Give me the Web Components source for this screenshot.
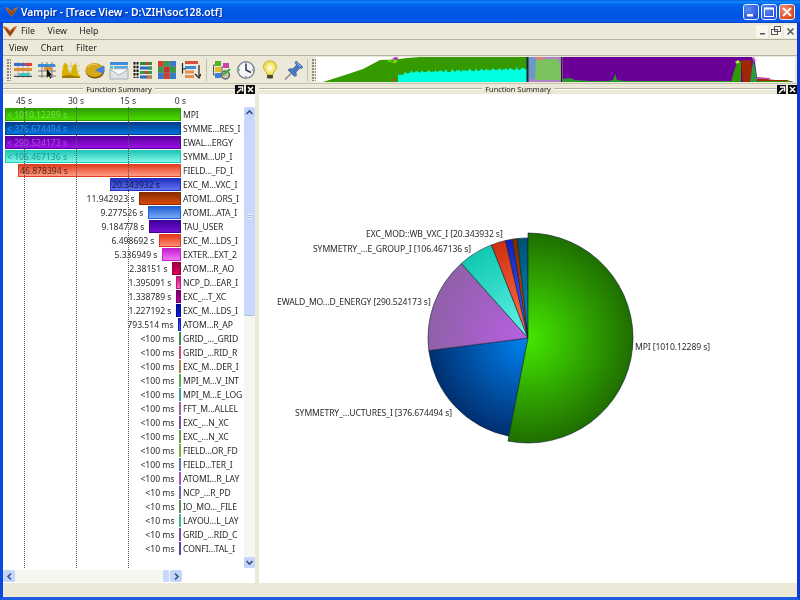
<!DOCTYPE html>
<html><head><meta charset="utf-8"><title>Vampir</title>
<style>html,body{margin:0;padding:0;background:#ece9d8;overflow:hidden}</style></head>
<body><vampir-app></vampir-app>
<script>
const FONT='"Noto Sans","Open Sans",sans-serif';
const LOGO=`<svg viewBox="0 0 16 14" width="100%" height="100%"><path d="M0 1C3 1 6 3 7.500 6L8 3.500 8.500 6C10 3 13 1 16 1 14 5 11 9 8 13 5 9 2 5 0 1Z" fill="#c8641e"/><path d="M3 3.500C5 4.500 7 6.500 8 9 9 6.500 11 4.500 13 3.500 11.500 6.500 9.500 9 8 11.500 6.500 9 4.500 6.500 3 3.500Z" fill="#6e3a18"/></svg>`;
class Base extends HTMLElement{
  render(html){ (this.shadowRoot||this.attachShadow({mode:'open'})).innerHTML=html; }
}
class TitleBar extends Base{connectedCallback(){this.render(`<style>
:host{display:flex;align-items:center;height:23px;flex:none;padding:0 5px 0 5px;box-sizing:border-box;
background:linear-gradient(#0a5fe0 0,#0f8aff 2px,#0068ee 4px,#0058e6 10px,#0054e3 17px,#0a5cf0 21px,#0040c0 23px);color:#fff;font:600 10.300px ${FONT};text-shadow:1px 1px 0 #0a2f9a}
.logo{width:13px;height:12px;margin-right:3px}.t{flex:1;white-space:nowrap}
.b{width:16px;height:16px;margin-left:2px;border:1px solid #e8eefc;border-radius:3px;box-sizing:border-box;display:flex;align-items:center;justify-content:center;background:radial-gradient(circle at 30% 30%,#5f8ef0,#2450d8 80%)}
.b.x{background:radial-gradient(circle at 30% 30%,#f09070,#d8401c 80%)} svg{display:block}
</style><span class="logo">${LOGO}</span><span class="t">Vampir - [Trace View - D:\\ZIH\\soc128.otf]</span>
<span class="b"><svg width="12" height="12"><rect x="2" y="8" width="6" height="2.500" fill="#fff"/></svg></span>
<span class="b"><svg width="12" height="12"><rect x="1.500" y="2.500" width="9" height="8" fill="none" stroke="#fff" stroke-width="1"/><rect x="1" y="1.500" width="10" height="2" fill="#fff"/></svg></span>
<span class="b x"><svg width="12" height="12"><path d="M2 2L10 10M10 2L2 10" stroke="#fff" stroke-width="1.800"/></svg></span>`)}}
class MenuBar extends Base{connectedCallback(){const items=(this.getAttribute('items')||'').split(',');const main=this.hasAttribute('main');
this.render(`<style>
:host{display:flex;align-items:center;flex:none;box-sizing:border-box;height:${main?17:16}px;border-bottom:1px solid #b4b1a2;font:8.800px ${FONT};color:#222;background:#ece9d8;padding-left:${main?0:6}px}
.logo{width:14px;height:13px;margin-right:4px}span.i{margin-right:12.500px}
.sp{flex:1}.m{width:12px;height:13px;margin-left:2px;background:#f6f5ee;display:flex;align-items:center;justify-content:center}
</style>${main?`<span class="logo">${LOGO}</span>`:''}${items.map(i=>`<span class="i">${i}</span>`).join('')}<span class="sp"></span>
${main?`<span class="m"><svg width="9" height="9"><rect x="2" y="6" width="5" height="1.500" fill="#555"/></svg></span>
<span class="m"><svg width="10" height="10"><rect x=".5" y="3.500" width="6" height="5" fill="none" stroke="#555"/><rect x="3.500" y=".5" width="6" height="5" fill="none" stroke="#555"/></svg></span>
<span class="m" style="margin-right:1px"><svg width="9" height="9"><path d="M1.500 1.500L7.500 7.500M7.500 1.500L1.500 7.500" stroke="#555" stroke-width="1.500"/></svg></span>`:''}`)}}
const ICONS=[
`<path d="M1 5H19M1 10H19M1 15H19M5 2V18M10 2V18M15 2V18" stroke="#8b8878" stroke-width=".6"/><rect x="1" y="3" width="12" height="3" fill="#3c6cc4"/><rect x="12" y="3" width="7" height="3" fill="#d84040"/><rect x="1" y="8" width="18" height="3" fill="#e0903c"/><rect x="6" y="13" width="11" height="3" fill="#40c8c0"/><rect x="1" y="16" width="18" height="1" fill="#445"/>`,
`<path d="M1 6H19M1 11H19M1 16H19M5 2V18M10 2V18M15 2V18" stroke="#55524a" stroke-width=".7"/><rect x="1" y="4" width="17" height="3" fill="#3c8cd8"/><rect x="7" y="7" width="8" height="3" fill="#e09030"/><path d="M10 9L15 15 13 15.500 14.500 18 13 18.500 12 16 10 17Z" fill="#111"/>`,
`<rect x="1" y="2" width="18" height="16" fill="#eee8c8"/><path d="M1 6H19M1 11H19M5 2V18M10 2V18M15 2V18" stroke="#aaa" stroke-width=".5"/><path d="M1 18V12L3 3 6 4 8 12 10 13 12 5 15 4 17 14 19 16V18Z" fill="#d8b000"/><path d="M1 18V16L8 15 19 17V18Z" fill="#a07800"/>`,
`<ellipse cx="10" cy="11" rx="9.500" ry="7.500" fill="#7a5c00"/><ellipse cx="9.500" cy="10" rx="9" ry="7" fill="#d4a818"/><path d="M10 10L19 5.500C20 8 20 11 18 14Z" fill="#4a7fd8"/><path d="M3 7C6 4 9 4 12 5" stroke="#f0d870" fill="none"/>`,
`<rect x="1" y="2" width="18" height="3" fill="#3c8cd8"/><rect x="5" y="6" width="14" height="2.500" fill="#58a8e8"/><rect x="1" y="6" width="3" height="2.500" fill="#40c8c0"/><rect x="1" y="9" width="18" height="10" fill="#dfe3e6" stroke="#8a97a0" stroke-width=".7"/><path d="M1 9.500L10 15 19 9.500" fill="#fafafa" stroke="#8a97a0" stroke-width=".7"/>`,
`<path d="M1.500 2V18M4.500 2V18" stroke="#111" stroke-width="2" stroke-dasharray="2.500 1.200"/><g><rect x="7" y="2" width="12" height="3" fill="#2f8a3c"/><rect x="7" y="6.500" width="12" height="3" fill="#2a6cc4"/><rect x="7" y="11" width="12" height="3" fill="#3a9a40"/><rect x="7" y="15.500" width="12" height="3" fill="#2a6cc4"/><rect x="13" y="2" width="3" height="3" fill="#c84040"/><rect x="15" y="6.500" width="4" height="3" fill="#3a9a40"/><rect x="12" y="11" width="3" height="3" fill="#c84040"/><rect x="14" y="15.500" width="5" height="3" fill="#d08030"/></g>`,
`<rect x="1" y="1" width="18" height="18" fill="#888"/><g><rect x="1" y="1" width="5.500" height="5.500" fill="#d04030"/><rect x="7" y="1" width="5.500" height="5.500" fill="#3a9a40"/><rect x="13" y="1" width="6" height="5.500" fill="#3a78c8"/><rect x="1" y="7" width="5.500" height="5.500" fill="#3a9a40"/><rect x="7" y="7" width="5.500" height="5.500" fill="#c83030"/><rect x="13" y="7" width="6" height="5.500" fill="#3a9a40"/><rect x="1" y="13" width="5.500" height="6" fill="#3a78c8"/><rect x="7" y="13" width="5.500" height="6" fill="#d04030"/><rect x="13" y="13" width="6" height="6" fill="#3a78c8"/></g>`,
`<rect x="4" y="1" width="13" height="3" fill="#d85040"/><rect x="4" y="6" width="11" height="3" fill="#3c8cd8"/><rect x="4" y="10.500" width="9" height="3" fill="#e09050"/><rect x="4" y="15" width="9" height="3" fill="#e09050"/><path d="M1.500 3V13.500M1.500 9H5M18 5V16M14 14L18 18 20 14" stroke="#222" stroke-width="1.200" fill="none"/>`,
`<path d="M4 5H1.500V15H4M10 6V13" stroke="#556" fill="none"/><rect x="3" y="1" width="6" height="5" fill="#58b030"/><rect x="3" y="7" width="6" height="5" fill="#e0c020"/><rect x="3" y="13" width="6" height="5" fill="#4080d8"/><rect x="11" y="3" width="6" height="5" fill="#d040a0"/><circle cx="13.500" cy="15" r="4" fill="#c8c4b0" stroke="#666" stroke-width="1.500"/><path d="M11 15L18 9" stroke="#30b030" stroke-width="2"/>`,
`<circle cx="10" cy="10" r="9" fill="#7f8a96"/><circle cx="10" cy="10" r="7.500" fill="#f4f6f8"/><path d="M10 4V10L15 12.500" stroke="#334" stroke-width="1.500" fill="none"/><path d="M10 2.800V4M10 16V17.200M2.800 10H4M16 10H17.200" stroke="#556"/>`,
`<defs><radialGradient id="bulb"><stop offset="0" stop-color="#fffff0"/><stop offset="1" stop-color="#f0d830"/></radialGradient></defs><path d="M10 1C5.500 1 3.500 4 3.500 7C3.500 10.500 7 11.500 7 15H13C13 11.500 16.500 10.500 16.500 7C16.500 4 14.500 1 10 1Z" fill="url(#bulb)" stroke="#b8a020" stroke-width=".7"/><rect x="7" y="15" width="6" height="3.500" rx="1" fill="#444"/>`,
`<path d="M12 1L19 7 17.500 8.500 16 8 12 12 12.500 15.500 10.500 16.500 4 10 6 8.500 8.500 9 12.500 5 11 3Z" fill="#4a78c0" stroke="#2a4a88" stroke-width=".5"/><path d="M12.500 3L17 7" stroke="#a0c0f0"/><path d="M7 13.500L1 19.500" stroke="#8a8a8a" stroke-width="1.500"/>`];
class ToolBar extends Base{connectedCallback(){
 const ic=i=>`<span class="ic"><svg viewBox="0 0 20 20" width="20" height="20">${ICONS[i]}</svg></span>`;
 let cy=[];for(let x=398;x<=527;x+=1.5){const base=x<410?78-(x-398)*.3:74.500-(x-410)*.03;cy.push(x+','+(base-2.500*Math.abs(Math.sin(x*1.7)+Math.sin(x*.63))*.7).toFixed(1))}
 this.render(`<style>
:host{display:flex;align-items:center;flex:none;height:28px;box-sizing:border-box;background:#ece9d8;border-bottom:1px solid #c5c2b2;padding:1px 2px 1px 4px}
.grip{width:4px;height:22px;flex:none;background:radial-gradient(circle at 1px 1px,#8a8a80 .8px,transparent 1px) 0 0/3px 3px}
.ic{width:24px;height:22px;flex:none;display:flex;align-items:center;justify-content:center}
.sep{width:1px;height:22px;background:#c2bfae;margin:0 3px;flex:none}
.ov{flex:none;display:block}
</style><span class="grip"></span>${[0,1,2,3,4,5,6,7].map(ic).join('')}<span class="sep"></span>${[8,9,10,11].map(ic).join('')}
<span class="sep" style="margin:0 4px 0 1px"></span><span class="grip"></span>
<svg class="ov" width="479" height="25" viewBox="316 58 479 25">
<rect x="316" y="58" width="479" height="25" fill="#fff"/>
<path d="M323 83L345 76 363 70 380 61 395 60.500 407 59 420 58H527V83Z" fill="#349a00"/>
<path d="M387 62l3-1.500 2 3 3-3 3 1-3 3z" fill="#7ae000"/><path d="M392 60l3-2 4 1-3 2z" fill="#c020c0"/>
<path d="M398 83L${cy.join(' ')} 527 83Z" fill="#00ffe0"/>
<rect x="392" y="80" width="3" height="2" fill="#c04030"/>
<rect x="527" y="58" width="35" height="25" fill="#b080c8"/>
<path d="M529 58h9l2 22h-11z" fill="#6c98c8"/><path d="M536 60h22l2 6 1 15h-26z" fill="#7cc25e"/><path d="M535 58h8v3h-6z" fill="#e08080"/>
<rect x="526.500" y="58" width="2" height="25" fill="#123"/><rect x="561" y="58" width="1.500" height="25" fill="#222"/>
<path d="M562.500 58H752L755 63 757 78 770 81 790 82 794 83H562.500Z" fill="#6a0098"/>
<path d="M562.500 83V80L570 79 575 81 590 82 608 82 613 81 615 75 617 81 625 82 730 82 732 83Z" fill="#2a9a2a"/>
<path d="M731 83L734 72 737 64 741 62 741 83Z" fill="#2e9a00"/><path d="M741 61.500L751 61 752 70 750 83H743L742 72Z" fill="#a02800"/><path d="M750 83L752 70 753 61 755 68 757 80 760 83Z" fill="#2a9a40"/>
<path d="M735 63l3-2 2 2-3 2z" fill="#b0e840"/><path d="M752 59l2-1 2 4-2 1z" fill="#c060c0"/>
<path d="M757 79L775 81 787 81 792 83H757Z" fill="#a02800"/><path d="M757 78L770 79 770 80 757 80Z" fill="#c050c0"/>
<path d="M758 82L790 82 792 83H758Z" fill="#2e9a00"/>
</svg>`)}}
class FnPanel extends Base{connectedCallback(){this.render(`<style>
:host{display:flex;flex-direction:column;min-width:0;font:8.600px ${FONT};color:#222}
.h{height:10px;flex:none;display:flex;align-items:center;background:#ece9d8}
.l{flex:1;height:0;border-top:1px solid #b4b1a2;border-bottom:1px solid #fff}
.t{padding:0 3px;white-space:nowrap;font-size:7.400px;line-height:10px}
.tl{width:20px;display:flex;justify-content:flex-end;gap:2px;flex:none}
.k{width:9px;height:9px;background:#0a0a0a;display:block}
.b{flex:1;background:#fff;min-height:0;display:flex;flex-direction:column;overflow:hidden}
</style><div class="h"><span class="l"></span><span class="t">${this.getAttribute('label')}</span><span class="l"></span>
<span class="tl"><svg class="k" viewBox="0 0 9 9"><path d="M2 8L6 4M3 2H7.500V6.500" stroke="#fff" stroke-width="1.600" fill="none"/></svg><svg class="k" viewBox="0 0 9 9"><path d="M2 2L7 7M7 2L2 7" stroke="#fff" stroke-width="1.500"/></svg></span></div>
<div class="b"><slot></slot></div>`)}}
class TimeAxis extends Base{connectedCallback(){this.render(`<style>
:host{display:flex;flex:none;height:13px;gap:20px;padding-left:5px;font:8.600px ${FONT};color:#333;background:#fff}
span{width:32px;text-align:center;line-height:14px}span:last-child{width:33px}
</style><span>45 s</span><span>30 s</span><span>15 s</span><span>0 s</span>`)}}
class FnRow extends Base{connectedCallback(){
 const w=+this.getAttribute('w'),c=this.getAttribute('c'),d=this.getAttribute('d')||c,tc=this.getAttribute('tc'),v=this.getAttribute('v'),inside=tc!==null;
 this.render(`<style>
:host{display:flex;height:14px;box-sizing:border-box;padding-top:1px;font:8.600px/14px ${FONT};color:#2a2a2a;white-space:nowrap}
.a{width:178px;flex:none;display:flex;justify-content:flex-end;align-items:flex-start}
.bar{width:${w}px;height:13px;flex:none;box-sizing:border-box;border:1px solid ${c};background:linear-gradient(${c},${d});overflow:hidden}
.bar span{color:${tc||'#222'};padding-left:1px;line-height:12px;display:block}
.v{padding-right:4.500px}.n{padding-left:2px;color:#2a2a2a;letter-spacing:-.08px}
</style><div class="a">${inside?'':`<span class="v"><slot></slot></span>`}<div class="bar">${inside?`<span>${v}</span>`:''}</div></div><span class="n">${this.getAttribute('n')}</span>`)}}
class VScroll extends Base{connectedCallback(){this.render(`<style>
:host{display:flex;flex-direction:column;width:11px;flex:none;background:#f6f6f0;position:relative}
.a{height:11px;background:#c4d4fa;border-radius:2px;display:flex;align-items:center;justify-content:center;flex:none}
.th{height:198px;background:#c8d8fc;border-radius:2px;flex:none;border-bottom:1px solid #aebde0;box-sizing:border-box;display:flex;align-items:center;justify-content:center}
.th i{display:block;width:5px;height:5px;background:repeating-linear-gradient(#eef3ff 0 1px,#a8bae0 1px 2px)}
.s{flex:1}
</style><div class="a"><svg width="9" height="7"><path d="M1.500 5L4.500 2 7.500 5" fill="none" stroke="#33507f" stroke-width="1.600"/></svg></div>
<div class="th"><i></i></div><div class="s"></div>
<div class="a"><svg width="9" height="7"><path d="M1.500 2L4.500 5 7.500 2" fill="none" stroke="#33507f" stroke-width="1.600"/></svg></div>`)}}
class HScroll extends Base{connectedCallback(){this.render(`<style>
:host{display:flex;flex:none;height:12px;margin-top:2px;margin-bottom:1px;width:179px;background:#f6f6f0}
.a{width:12px;background:#c4d4fa;border-radius:2px;display:flex;align-items:center;justify-content:center;flex:none}
.th{width:6px;background:#c8d8fc;margin-right:1px;margin-left:auto;flex:none;border-radius:2px}
</style><div class="a"><svg width="7" height="9"><path d="M5 1.500L2 4.500 5 7.500" fill="none" stroke="#33507f" stroke-width="1.600"/></svg></div>
<div class="th"></div>
<div class="a"><svg width="7" height="9"><path d="M2 1.500L5 4.500 2 7.500" fill="none" stroke="#33507f" stroke-width="1.600"/></svg></div>`)}}
const ROWS=[
['< 1010.12289 s','MPI',176,'#2f9f00','#48dc00','#74e444'],
['< 376.674494 s','SYMME...RES_I',176,'#003f8f','#0072dc','#3a90e8'],
['< 290.524173 s','EWAL...ERGY',176,'#5a00a0','#9c10e4','#b848f0'],
['< 106.467136 s','SYMM...UP_I',176,'#20c8b8','#84f8e8','#189a90'],
['46.878394 s','FIELD..._FD_I',163,'#e04020','#ff9c84','#552a20'],
['20.343932 s','EXC_M...VXC_I',71,'#2030c0','#6474f4','#111a48'],
['11.942923 s','ATOMI...ORS_I',42,'#8a2c00','#dc4a08'],
['9.277526 s','ATOMI...ATA_I',33,'#2060d0','#78acf8'],
['9.184778 s','TAU_USER',32,'#3e009c','#7410d4'],
['6.498692 s','EXC_M...LDS_I',22,'#e03818','#ff8c74'],
['5.336949 s','EXTER...EXT_2',19,'#c020d0','#f478f4'],
['2.38151 s','ATOM...R_AO',9,'#9c003c','#d80064'],
['1.395091 s','NCP_D...EAR_I',5,'#c01880','#ff64b4'],
['1.338789 s','EXC_...T_XC',5,'#7c006c','#b400a4'],
['1.227192 s','EXC_M...LDS_I',5,'#00089c','#1020d4'],
['793.514 ms','ATOM...R_AP',3,'#1020c0','#5464ff'],
['<100 ms','GRID_..._GRID',2,'#3f8a5a'],['<100 ms','GRID_...RID_R',2,'#c04a7a'],['<100 ms','EXC_M...DER_I',2,'#b08050'],
['<100 ms','MPI_M...V_INT',2,'#50b050'],['<100 ms','MPI_M...E_LOG',2,'#40a0a0'],['<100 ms','FFT_M...ALLEL',2,'#a060b0'],
['<100 ms','EXC_...N_XC',2,'#7050a0'],['<100 ms','EXC_...N_XC',2,'#60a040'],['<100 ms','FIELD...OR_FD',2,'#80b040'],
['<100 ms','FIELD...TER_I',2,'#6070b0'],['<100 ms','ATOMI...R_LAY',2,'#b050c0'],['<10 ms','NCP_...R_PD',2,'#7060b0'],
['<10 ms','IO_MO..._FILE',2,'#609050'],['<10 ms','LAYOU...L_LAY',2,'#40b090'],['<10 ms','GRID_...RID_C',2,'#8050a0'],['<10 ms','CONFI...TAL_I',2,'#6040a0']];
class FnChart extends Base{connectedCallback(){
 const esc=s=>s.replace(/</g,'&lt;');
 this.render(`<style>
:host{display:flex;flex:1;min-height:0;position:relative}
.rows{width:241px;flex:none}
.g{position:absolute;top:0;bottom:0;width:0;border-left:1px dotted #555;pointer-events:none}
</style><div class="rows">${ROWS.map(r=>`<fn-row n="${r[1]}" w="${r[2]}" c="${r[3]}" ${r[4]?`d="${r[4]}"`:''} ${r[5]?`tc="${r[5]}" v="${esc(r[0])}"`:''}>${esc(r[0])}</fn-row>`).join('')}</div>
<v-scroll></v-scroll>
<i class="g" style="left:21px"></i><i class="g" style="left:73px"></i><i class="g" style="left:125px"></i>`)}}
class PieChart extends Base{connectedCallback(){
 const cx=269,cy=244;
 const pt=(a,r)=>{const t=a*Math.PI/180;return (cx+r*Math.sin(t)).toFixed(2)+' '+(cy-r*Math.cos(t)).toFixed(2)};
 const sl=(a,b,r,f)=>`<path d="M${cx} ${cy}L${pt(a,r)}A${r} ${r} 0 ${b-a>180?1:0} 1 ${pt(b,r)}Z" fill="url(#${f})" stroke="#0c2030" stroke-width=".6"/>`;
 const G=[['g','#44e800','#1f6e00',105],['b','#0084f4','#002f70',100],['p','#b860e4','#9060a8',100],['t','#66f4e8','#10c8b0',100],['o','#ff7450','#d03010',100],['u','#5064ff','#1020c0',100],['d','#e05010','#7a2c00',100],['c','#0094c4','#005070',100]];
 const labels=[['EXC_MOD::WB_VXC_I [20.343932 s]',107,141],['SYMMETRY_...E_GROUP_I [106.467136 s]',54,155.500],['EWALD_MO...D_ENERGY [290.524173 s]',18,208.500],['SYMMETRY_...UCTURES_I [376.674494 s]',36,319.500],['MPI [1010.12289 s]',376,253.500]];
 this.render(`<style>:host{display:block;flex:1;background:#fff;min-height:0}svg{display:block;width:100%;height:100%}
text{font:8.600px ${FONT};fill:#2a2a2a;letter-spacing:-.1px}</style>
<svg viewBox="0 0 538 489"><defs>${G.map(g=>`<radialGradient id="${g[0]}" gradientUnits="userSpaceOnUse" cx="${cx}" cy="${cy}" r="${g[3]}"><stop offset="0" stop-color="${g[1]}"/><stop offset="1" stop-color="${g[2]}"/></radialGradient>`).join('')}</defs>
${sl(191,262.8,100,'b')}${sl(262.8,318.2,100,'p')}${sl(318.2,338.6,100,'t')}${sl(338.6,347,100,'o')}${sl(347,351,100,'u')}${sl(351,353.9,100,'d')}${sl(353.9,360,100,'c')}${sl(0,191,105,'g')}
${labels.map(l=>`<text x="${l[1]}" y="${l[2]}" dominant-baseline="middle">${l[0]}</text>`).join('')}</svg>`)}}
class StatusBar extends Base{connectedCallback(){this.render(`<style>:host{display:block;height:14px;flex:none;background:#ece9d8}</style>`)}}
class VampirApp extends Base{connectedCallback(){this.render(`<style>
:host{display:flex;flex-direction:column;width:800px;height:600px;box-sizing:border-box;background:#ece9d8;overflow:hidden;filter:blur(.3px)}
.win{flex:1;display:flex;flex-direction:column;min-height:0;border:solid #0a4ae0;border-width:0 3px 3px 3px;border-right-color:#0838d8;border-bottom-color:#1c5be0}
.main{flex:1;display:flex;gap:4px;min-height:0}
.left{width:252px;flex:none}.right{flex:1}
</style><title-bar></title-bar><div class="win">
<menu-bar main items="File,View,Help"></menu-bar><menu-bar items="View,Chart,Filter"></menu-bar><tool-bar></tool-bar>
<div class="main"><fn-panel class="left" label="Function Summary"><time-axis></time-axis><fn-chart></fn-chart><h-scroll></h-scroll></fn-panel>
<fn-panel class="right" label="Function Summary"><pie-chart></pie-chart></fn-panel></div>
<status-bar></status-bar></div>`)}}
[['title-bar',TitleBar],['menu-bar',MenuBar],['tool-bar',ToolBar],['fn-panel',FnPanel],['time-axis',TimeAxis],['fn-row',FnRow],['v-scroll',VScroll],['h-scroll',HScroll],['fn-chart',FnChart],['pie-chart',PieChart],['status-bar',StatusBar],['vampir-app',VampirApp]].forEach(([n,c])=>customElements.define(n,c));
</script></body></html>
